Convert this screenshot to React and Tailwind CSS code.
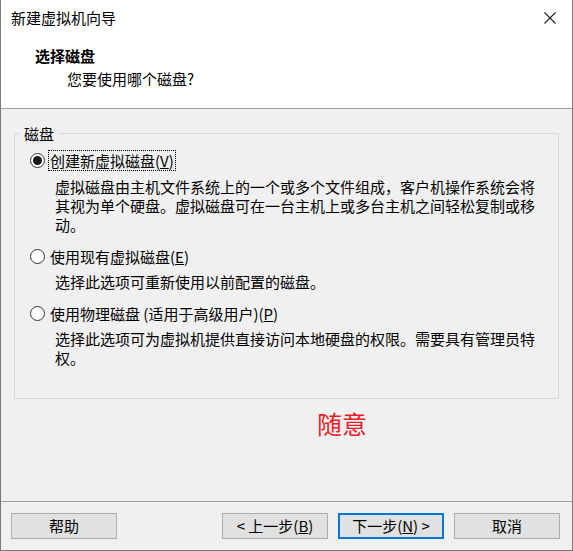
import React from "react";

function Radio({ checked }) {
  return (
    <span className="w-[15px] h-[15px] rounded-full border border-[#333333] bg-white flex items-center justify-center shrink-0">
      {checked && <span className="w-[9px] h-[9px] rounded-full bg-[#1a1a1a]" />}
    </span>
  );
}

function Btn({ children, primary }) {
  return (
    <button
      className={
        primary
          ? "w-[106px] h-[26px] bg-[#e1e1e1] border-2 border-[#0078d7] text-[15px] leading-[20px] text-black flex items-center justify-center whitespace-pre"
          : "w-[106px] h-[26px] bg-[#e1e1e1] border border-[#adadad] text-[15px] leading-[20px] text-black flex items-center justify-center whitespace-pre"
      }
    >
      {children}
    </button>
  );
}

export default function App() {
  return (
    <div className="w-[573px] h-[551px] flex flex-col bg-[#f0f0f0] border-x border-b border-[#7a7a7a] font-['Noto_Sans_CJK_SC',sans-serif] text-[15px] leading-[19px] text-black overflow-hidden">
      {/* Header */}
      <div className="h-[109px] shrink-0 bg-white border-b border-[#a0a0a0] flex flex-col">
        <div className="h-[36px] flex items-center justify-between pl-[10px] pr-[16px]">
          <span className="leading-[20px]">新建虚拟机向导</span>
          <svg width="12" height="12" viewBox="0 0 12 12" className="shrink-0">
            <path d="M0.5 0.5 L11.5 11.5 M11.5 0.5 L0.5 11.5" stroke="#222" strokeWidth="1.1" fill="none" />
          </svg>
        </div>
        <div className="mt-[10px] pl-[34px] leading-[20px] font-bold">选择磁盘</div>
        <div className="mt-[3px] pl-[66px] leading-[20px]">您要使用哪个磁盘?</div>
      </div>

      {/* Body */}
      <div className="flex-1 flex flex-col">
        <fieldset className="mt-[15px] ml-[13px] w-[545px] h-[275px] border border-[#d6d6d6] flex flex-col">
          <legend className="ml-[4px] px-[5px] leading-[19px]">磁盘</legend>

          <div className="mt-[7px] flex items-center pl-[15px]">
            <Radio checked />
            <span className="ml-[3px] px-[1px] border border-dotted border-black leading-[19px]">
              创建新虚拟磁盘(<span className="underline">V</span>)
            </span>
          </div>
          <div className="mt-[6px] pl-[40px] leading-[19px]">
            <div>虚拟磁盘由主机文件系统上的一个或多个文件组成，客户机操作系统会将</div>
            <div>其视为单个硬盘。虚拟磁盘可在一台主机上或多台主机之间轻松复制或移</div>
            <div>动。</div>
          </div>

          <div className="mt-[12px] flex items-center pl-[15px]">
            <Radio />
            <span className="ml-[3px] px-[1px] border border-transparent leading-[19px]">
              使用现有虚拟磁盘(<span className="underline">E</span>)
            </span>
          </div>
          <div className="mt-[5px] pl-[40px] leading-[19px]">
            选择此选项可重新使用以前配置的磁盘。
          </div>

          <div className="mt-[12px] flex items-center pl-[15px]">
            <Radio />
            <span className="ml-[3px] px-[1px] border border-transparent leading-[19px]">
              使用物理磁盘 (适用于高级用户)(<span className="underline">P</span>)
            </span>
          </div>
          <div className="mt-[5px] pl-[40px] leading-[19px]">
            <div>选择此选项可为虚拟机提供直接访问本地硬盘的权限。需要具有管理员特</div>
            <div>权。</div>
          </div>
        </fieldset>

        <div className="mt-[12px] pl-[316px] text-[25px] leading-[25px] text-[#e81d25]">随意</div>
      </div>

      {/* Footer */}
      <div className="h-[49px] shrink-0 border-t border-[#a0a0a0] flex items-start pt-[11px] pl-[10px] pr-[12px]">
        <Btn>帮助</Btn>
        <div className="flex-1" />
        <div className="flex gap-[10px]">
          <Btn>{"< 上一步("}<span className="underline">B</span>{")"}</Btn>
          <Btn primary>{"下一步("}<span className="underline">N</span>{") >"}</Btn>
          <Btn>取消</Btn>
        </div>
      </div>
    </div>
  );
}
